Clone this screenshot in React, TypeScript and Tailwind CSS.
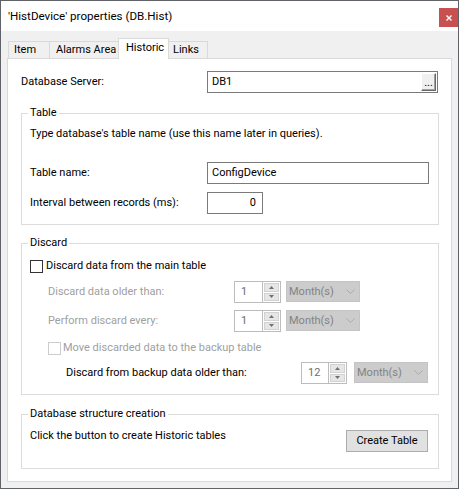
import React from "react";

const Spinner = ({ value, w }: { value: string; w: string }) => (
  <div className={`flex ${w} h-[22px] shrink-0 border border-[#bcbcbc] bg-white`}>
    <div className="flex-1 flex items-center pl-[6px] text-[#6d6d6d]">{value}</div>
    <div className="w-[18px] flex flex-col border-l border-[#bcbcbc] p-[1px] gap-[1px]">
      <div className="flex-1 flex items-center justify-center bg-[#e6e6e6] border border-[#d2d2d2]">
        <svg width="5" height="3" viewBox="0 0 5 3">
          <path d="M0 3 L2.5 0 L5 3 Z" fill="#707070" />
        </svg>
      </div>
      <div className="flex-1 flex items-center justify-center bg-[#e6e6e6] border border-[#d2d2d2]">
        <svg width="5" height="3" viewBox="0 0 5 3">
          <path d="M0 0 L2.5 3 L5 0 Z" fill="#707070" />
        </svg>
      </div>
    </div>
  </div>
);

const Combo = ({ ml }: { ml: string }) => (
  <div className={`${ml} self-start w-[74px] h-[21px] shrink-0 flex items-center justify-between bg-[#cccccc] border border-[#c4c4c4] pl-[2px] pr-[4px] text-[#838383]`}>
    <span>Month(s)</span>
    <svg width="9" height="5" viewBox="0 0 9 5">
      <path d="M0.5 0.5 L4.5 4.5 L8.5 0.5" fill="none" stroke="#ababab" strokeWidth="1" />
    </svg>
  </div>
);

const Group = ({
  title,
  mt,
  pt,
  pb,
  children,
}: {
  title: string;
  mt: string;
  pt: string;
  pb: string;
  children: React.ReactNode;
}) => (
  <fieldset className={`${mt} border border-[#dcdcdc] pl-[6px] pr-[10px] ${pb} min-w-0`}>
    <legend className="px-[2px] leading-[16px]">{title}</legend>
    <div className={`pl-[2px] ${pt}`}>{children}</div>
  </fieldset>
);

export default function App() {
  return (
    <div className="w-[459px] h-[489px] border border-[#5f6368] bg-[#f0f0f0] flex flex-col text-[11px] leading-[16px] text-black whitespace-nowrap font-['Roboto',sans-serif]">
      {/* Title bar */}
      <div className="h-[30px] shrink-0 bg-white flex items-start justify-between">
        <div className="pl-[7px] h-[29px] flex items-center text-[11.6px]">'HistDevice' properties (DB.Hist)</div>
        <div className="mt-[7px] w-[19px] h-[19px] bg-[#c75050] flex items-center justify-center">
          <svg width="6" height="6" viewBox="0 0 6 6">
            <path d="M0.5 0.5 L5.5 5.5 M5.5 0.5 L0.5 5.5" stroke="#ffffff" strokeWidth="1.4" />
          </svg>
        </div>
      </div>

      {/* Body */}
      <div className="px-[6px] pt-[7px] pb-[6px] flex flex-col">
        {/* Tabs */}
        <div className="h-[20px] flex items-end pl-[1px]">
          <div className="w-[42px] h-[17px] border border-b-0 border-[#d9d9d9] bg-[#f0f0f0] pl-[5px] flex items-center">Item</div>
          <div className="w-[69px] h-[17px] border border-l-0 border-b-0 border-[#d9d9d9] bg-[#f0f0f0] pl-[6px] flex items-center">Alarms Area</div>
          <div className="relative z-10 -ml-[1px] mb-[-1px] w-[51px] h-[21px] border border-b-0 border-[#d9d9d9] bg-white pl-[7px] pb-[2px] flex items-center">Historic</div>
          <div className="w-[39px] h-[17px] border border-l-0 border-b-0 border-[#d9d9d9] bg-[#f0f0f0] pl-[4px] flex items-center">Links</div>
        </div>

        {/* Panel */}
        <div className="border border-[#d9d9d9] bg-white pl-[13px] pr-[12px] pt-[12px] pb-[12px] flex flex-col">
          <div className="h-[22px] flex items-center">
            <div className="w-[186px] shrink-0">Database Server:</div>
            <div className="w-[231px] h-[22px] shrink-0 border border-[#7a7a7a] bg-white flex items-center justify-between pl-[4px] pr-[1px]">
              <span>DB1</span>
              <div className="w-[15px] h-[18px] border border-white border-r-[#696969] border-b-[#696969] bg-[#f0f0f0] shadow-[inset_-1px_-1px_0_#a0a0a0] flex items-end justify-center pb-[3px] leading-[8px] text-[11px]">
                ...
              </div>
            </div>
          </div>

          <Group title="Table" mt="mt-[12px]" pt="pt-[5px]" pb="pb-[10px]">
            <div>Type database's table name (use this name later in queries).</div>
            <div className="mt-[20px] h-[22px] flex items-center">
              <div className="w-[177px] shrink-0">Table name:</div>
              <div className="w-[222px] h-[22px] shrink-0 border border-[#7a7a7a] bg-white flex items-center pl-[4px]">ConfigDevice</div>
            </div>
            <div className="mt-[8px] h-[22px] flex items-center">
              <div className="w-[177px] shrink-0">Interval between records (ms):</div>
              <div className="w-[56px] h-[22px] shrink-0 border border-[#7a7a7a] bg-white flex items-center justify-end pr-[6px]">0</div>
            </div>
          </Group>

          <Group title="Discard" mt="mt-[10px]" pt="pt-[7px]" pb="pb-[10px]">
            <div className="h-[16px] flex items-center">
              <div className="w-[13px] h-[13px] border border-[#333333] bg-white shrink-0" />
              <div className="ml-[3px]">Discard data from the main table</div>
            </div>
            <div className="mt-[7px] h-[22px] flex items-center pl-[18px]">
              <div className="w-[186px] shrink-0 text-[#a0a0a0]">Discard data older than:</div>
              <Spinner value="1" w="w-[47px]" />
              <Combo ml="ml-[5px]" />
            </div>
            <div className="mt-[7px] h-[22px] flex items-center pl-[18px]">
              <div className="w-[186px] shrink-0 text-[#a0a0a0]">Perform discard every:</div>
              <Spinner value="1" w="w-[47px]" />
              <Combo ml="ml-[5px]" />
            </div>
            <div className="mt-[8px] h-[16px] flex items-center pl-[18px]">
              <div className="w-[13px] h-[13px] border border-[#cccccc] bg-white shrink-0" />
              <div className="ml-[2px] text-[#a0a0a0]">Move discarded data to the backup table</div>
            </div>
            <div className="mt-[6px] h-[22px] flex items-center pl-[36px]">
              <div className="w-[235px] shrink-0">Discard from backup data older than:</div>
              <Spinner value="12" w="w-[46px]" />
              <Combo ml="ml-[7px]" />
            </div>
          </Group>

          <Group title="Database structure creation" mt="mt-[11px]" pt="pt-[6px]" pb="pb-[16px]">
            <div className="flex items-start justify-between">
              <div>Click the button to create Historic tables</div>
              <div className="mt-[2px] w-[82px] h-[22px] shrink-0 border border-[#adadad] bg-[#e1e1e1] flex items-center justify-center">
                Create Table
              </div>
            </div>
          </Group>
        </div>
      </div>
    </div>
  );
}
